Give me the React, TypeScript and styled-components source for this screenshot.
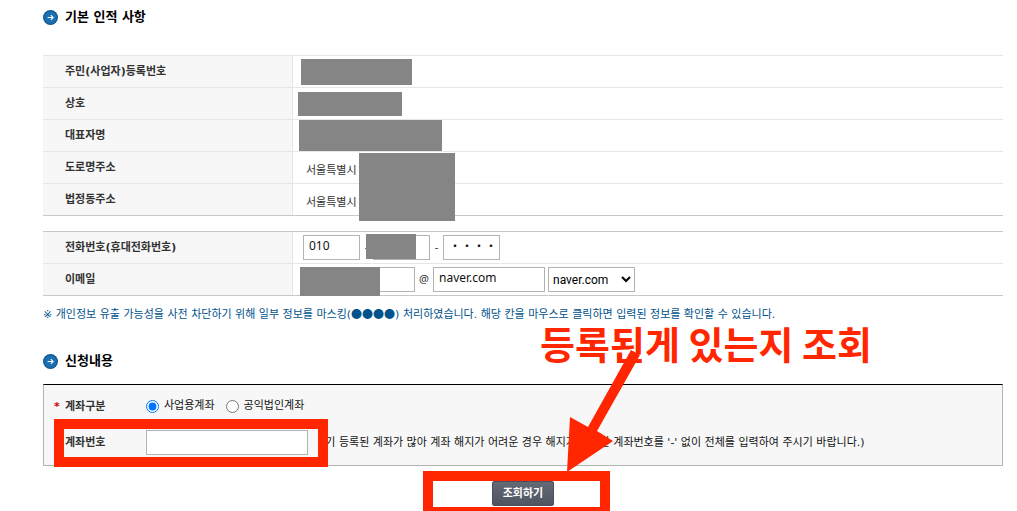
import React from 'react';
import styled, { createGlobalStyle, css } from 'styled-components';

const RED = '#ff2600';
const KR = '"Noto Sans CJK KR", sans-serif';
const TEXT = `"DejaVu Sans", ${KR}`;

const GlobalStyle = createGlobalStyle`
  *, *::before, *::after { box-sizing: border-box; }
  body {
    margin: 0;
    background: #fff;
    color: #333;
    font: 11px/16px ${TEXT};
  }
  input, select, button { margin: 0; font: inherit; color: #111; }
`;

const Page = styled.main`
  position: relative;
  min-height: 100vh;
  overflow: hidden;
  padding: 6px 14px 0 43px;
`;

const Heading = styled.h2`
  display: flex;
  align-items: center;
  gap: 7px;
  margin: 0;
  height: 22px;
  color: #000;
  font-size: 13px;
  font-weight: 700;
  line-height: 20px;
`;

const InfoTable = styled.table<{ $top: string; $gap: number }>`
  width: 100%;
  table-layout: fixed;
  border-spacing: 0;
  margin-top: ${(p) => p.$gap}px;
  border-top: 1px solid ${(p) => p.$top};
  border-bottom: 1px solid #c8c8c8;

  tr + tr > * { border-top: 1px solid #e6e6e6; }
  tr:first-child > * { height: 31px; }
`;

const LabelCell = styled.th`
  width: 250px;
  height: 32px;
  padding: 0 0 0 22px;
  border-right: 1px solid #e6e6e6;
  background: #f7f7f7;
  font-weight: 700;
  text-align: left;
`;

const ValueCell = styled.td`
  position: relative;
  height: 32px;
  padding: 0 0 0 10px;
`;

const Address = styled.span`
  display: block;
  padding: 6px 0 0 3px;
`;

const Mask = styled.span<{ $x: number; $y: number; $w: number; $h: number }>`
  position: absolute;
  z-index: 1;
  left: ${(p) => p.$x}px;
  top: ${(p) => p.$y}px;
  width: ${(p) => p.$w}px;
  height: ${(p) => p.$h}px;
  background: #858585;
`;

const Fields = styled.div`
  display: flex;
  align-items: center;
`;

const boxed = css`
  height: 25px;
  border: 1px solid #b3b3b3;
  border-radius: 0;
  background: #fff;
`;

const TextBox = styled.input<{ $w: number }>`
  ${boxed}
  width: ${(p) => p.$w}px;
  padding: 0 5px 4px;
  font: 12px/16px "Noto Sans", ${KR};
`;

const DomainSelect = styled.select`
  ${boxed}
  width: 87px;
  margin-left: 3px;
  padding: 0;
  color: #000;
  font: 12px/16px Roboto, sans-serif;
`;

const Separator = styled.span<{ $w: number }>`
  width: ${(p) => p.$w}px;
  padding-bottom: 2px;
  font-family: "Noto Sans", ${KR};
  text-align: center;
`;

const Notice = styled.p`
  margin: 10px 0 0;
  color: #00528c;
  line-height: 18px;
`;

const Dots = styled.span`
  font-family: ${KR};
  line-height: 1;
`;

const SecondHeading = styled(Heading)`
  margin-top: 26px;
`;

const FormBox = styled.section`
  margin-top: 12px;
  padding: 7px 0 1px;
  border: 1px solid #b3b3b3;
  border-top-color: #000;
  background: #f7f7f7;
`;

const FormRow = styled.div<{ $h: number }>`
  position: relative;
  display: flex;
  align-items: center;
  height: ${(p) => p.$h}px;
`;

const FormLabel = styled.span`
  display: flex;
  width: 102px;
  padding-top: 2px;
  font-weight: 700;
`;

const Required = styled.span`
  width: 21px;
  padding-left: 10px;
  color: #d00000;
`;

const Choice = styled.label`
  display: flex;
  align-items: center;
  gap: 5px;
  margin-right: 11px;
  color: #111;
  line-height: 14px;
`;

const Radio = styled.input`
  width: 13px;
  height: 13px;
`;

const Hint = styled.span`
  margin-left: 13px;
  padding-top: 2px;
  color: #111;
  white-space: nowrap;
`;

const Actions = styled.div`
  position: relative;
  display: flex;
  justify-content: center;
  padding-top: 15px;
`;

const LookupButton = styled.button`
  width: 62px;
  height: 25px;
  padding: 0;
  border: 1px solid #4a4f5b;
  border-radius: 2px;
  background: linear-gradient(#636975, #505562);
  color: #fff;
  font-weight: 700;
`;

const frame = css`
  position: absolute;
  border: 10px solid ${RED};
  pointer-events: none;
`;

const NumberFrame = styled.div`
  ${frame}
  left: 10px;
  top: -1px;
  width: 274px;
  height: 48px;
`;

const ActionFrame = styled.div`
  ${frame}
  left: calc(50% - 100px);
  top: 5px;
  width: 187px;
  height: 46px;
`;

const Callout = styled.div`
  position: absolute;
  z-index: 2;
  left: calc(50% + 17px);
  bottom: 34px;
  width: 340px;
  height: 146px;
  color: ${RED};
  font-family: ${KR};
  font-size: 38px;
  font-weight: 700;
  line-height: 34px;
  white-space: nowrap;
  pointer-events: none;

  svg { position: absolute; left: 0; top: 0; }
`;

const ArrowBadge = () => (
  <svg width="15" height="15" viewBox="0 0 15 15" aria-hidden="true">
    <circle cx="7.5" cy="7.5" r="7.5" fill="#0b5594" />
    <circle cx="7.5" cy="7.5" r="6.3" fill="#1e6fb0" />
    <path d="M4.6 7.5h5.4M7.8 5.1l2.4 2.4-2.4 2.4" fill="none" stroke="#fff" strokeWidth="1.1" />
  </svg>
);

const basicRows = [
  { label: '주민(사업자)등록번호', mask: [8, 3, 111, 26] },
  { label: '상호', mask: [5, 4, 104, 24] },
  { label: '대표자명', mask: [6, 0, 143, 31] },
  { label: '도로명주소', value: '서울특별시', mask: [66, 1, 96, 68] },
  { label: '법정동주소', value: '서울특별시' },
];

export default function App() {
  return (
    <>
      <GlobalStyle />
      <Page>
        <Heading><ArrowBadge />기본 인적 사항</Heading>
        <InfoTable $top="#e6e6e6" $gap={27}>
          <tbody>
            {basicRows.map(({ label, value, mask }) => (
              <tr key={label}>
                <LabelCell scope="row">{label}</LabelCell>
                <ValueCell>
                  {value && <Address>{value}</Address>}
                  {mask && <Mask $x={mask[0]} $y={mask[1]} $w={mask[2]} $h={mask[3]} />}
                </ValueCell>
              </tr>
            ))}
          </tbody>
        </InfoTable>

        <InfoTable $top="#c8c8c8" $gap={15}>
          <tbody>
            <tr>
              <LabelCell scope="row">전화번호(휴대전화번호)</LabelCell>
              <ValueCell>
                <Fields>
                  <TextBox $w={57} aria-label="전화번호 앞자리" defaultValue="010" />
                  <Separator $w={13}>-</Separator>
                  <TextBox $w={57} aria-label="전화번호 가운데 자리" />
                  <Separator $w={13}>-</Separator>
                  <TextBox $w={57} aria-label="전화번호 뒷자리" defaultValue="・・・・" />
                </Fields>
                <Mask $x={73} $y={2} $w={50} $h={25} />
              </ValueCell>
            </tr>
            <tr>
              <LabelCell scope="row">이메일</LabelCell>
              <ValueCell>
                <Fields>
                  <TextBox $w={112} aria-label="이메일 아이디" />
                  <Separator $w={18}>@</Separator>
                  <TextBox $w={112} aria-label="이메일 도메인" defaultValue="naver.com" />
                  <DomainSelect aria-label="도메인 선택" defaultValue="naver.com">
                    <option>naver.com</option>
                  </DomainSelect>
                </Fields>
                <Mask $x={7} $y={3} $w={80} $h={29} />
              </ValueCell>
            </tr>
          </tbody>
        </InfoTable>
        <Notice>
          ※ 개인정보 유출 가능성을 사전 차단하기 위해 일부 정보를 마스킹(<Dots>●●●●</Dots>) 처리하였습니다. 해당 칸을 마우스로 클릭하면 입력된 정보를 확인할 수 있습니다.
        </Notice>

        <SecondHeading><ArrowBadge />신청내용</SecondHeading>
        <FormBox>
          <FormRow $h={28} role="radiogroup" aria-labelledby="kind">
            <FormLabel id="kind"><Required>*</Required>계좌구분</FormLabel>
            <Choice><Radio type="radio" name="kind" defaultChecked />사업용계좌</Choice>
            <Choice><Radio type="radio" name="kind" />공익법인계좌</Choice>
          </FormRow>
          <FormRow $h={44}>
            <FormLabel as="label" htmlFor="account"><Required />계좌번호</FormLabel>
            <TextBox $w={162} id="account" />
            <Hint>(기 등록된 계좌가 많아 계좌 해지가 어려운 경우 해지가 필요한 계좌번호를 '-' 없이 전체를 입력하여 주시기 바랍니다.)</Hint>
            <NumberFrame />
          </FormRow>
        </FormBox>
        <Actions>
          <ActionFrame />
          <LookupButton type="button">조회하기</LookupButton>
          <Callout>
            등록된게 있는지 조회
            <svg width="100" height="150" viewBox="0 0 100 150" aria-hidden="true">
              <path d="M91 24L100 29L57 105L73 115L27 146L30 91L48 101Z" fill={RED} />
            </svg>
          </Callout>
        </Actions>
      </Page>
    </>
  );
}
